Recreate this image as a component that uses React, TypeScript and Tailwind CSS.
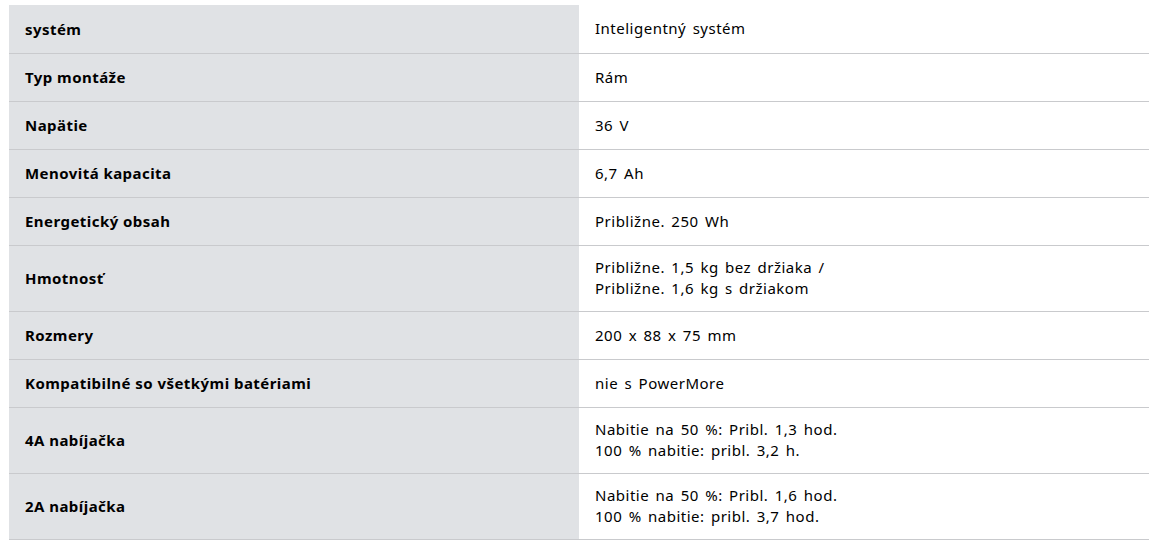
const rows: { label: string; value: string[] }[] = [
  { label: "systém", value: ["Inteligentný systém"] },
  { label: "Typ montáže", value: ["Rám"] },
  { label: "Napätie", value: ["36 V"] },
  { label: "Menovitá kapacita", value: ["6,7 Ah"] },
  { label: "Energetický obsah", value: ["Približne. 250 Wh"] },
  { label: "Hmotnosť", value: ["Približne. 1,5 kg bez držiaka /", "Približne. 1,6 kg s držiakom"] },
  { label: "Rozmery", value: ["200 x 88 x 75 mm"] },
  { label: "Kompatibilné so všetkými batériami", value: ["nie s PowerMore"] },
  { label: "4A nabíjačka", value: ["Nabitie na 50 %: Pribl. 1,3 hod.", "100 % nabitie: pribl. 3,2 h."] },
  { label: "2A nabíjačka", value: ["Nabitie na 50 %: Pribl. 1,6 hod.", "100 % nabitie: pribl. 3,7 hod."] },
];

export default function App() {
  return (
    <div className="min-h-[544px] w-[1158px] bg-white pl-[9px] pt-[5px] font-['Noto_Sans',sans-serif] text-[15px] text-black">
      <table className="w-[1140px] border-collapse">
        <tbody>
          {rows.map((row) => (
            <tr key={row.label} className="border-b border-[#c9cacd]">
              <td
                className={
                  row.value.length > 1
                    ? "h-[66px] w-[570px] bg-[#e0e2e5] px-4 align-middle font-bold tracking-[0.45px]"
                    : "h-[48px] w-[570px] bg-[#e0e2e5] px-4 align-middle font-bold tracking-[0.45px]"
                }
              >
                {row.label}
              </td>
              <td className="px-4 align-middle leading-[21px] tracking-[0.5px] [word-spacing:2px]">
                {row.value.map((line) => (
                  <div key={line}>{line}</div>
                ))}
              </td>
            </tr>
          ))}
        </tbody>
      </table>
    </div>
  );
}
